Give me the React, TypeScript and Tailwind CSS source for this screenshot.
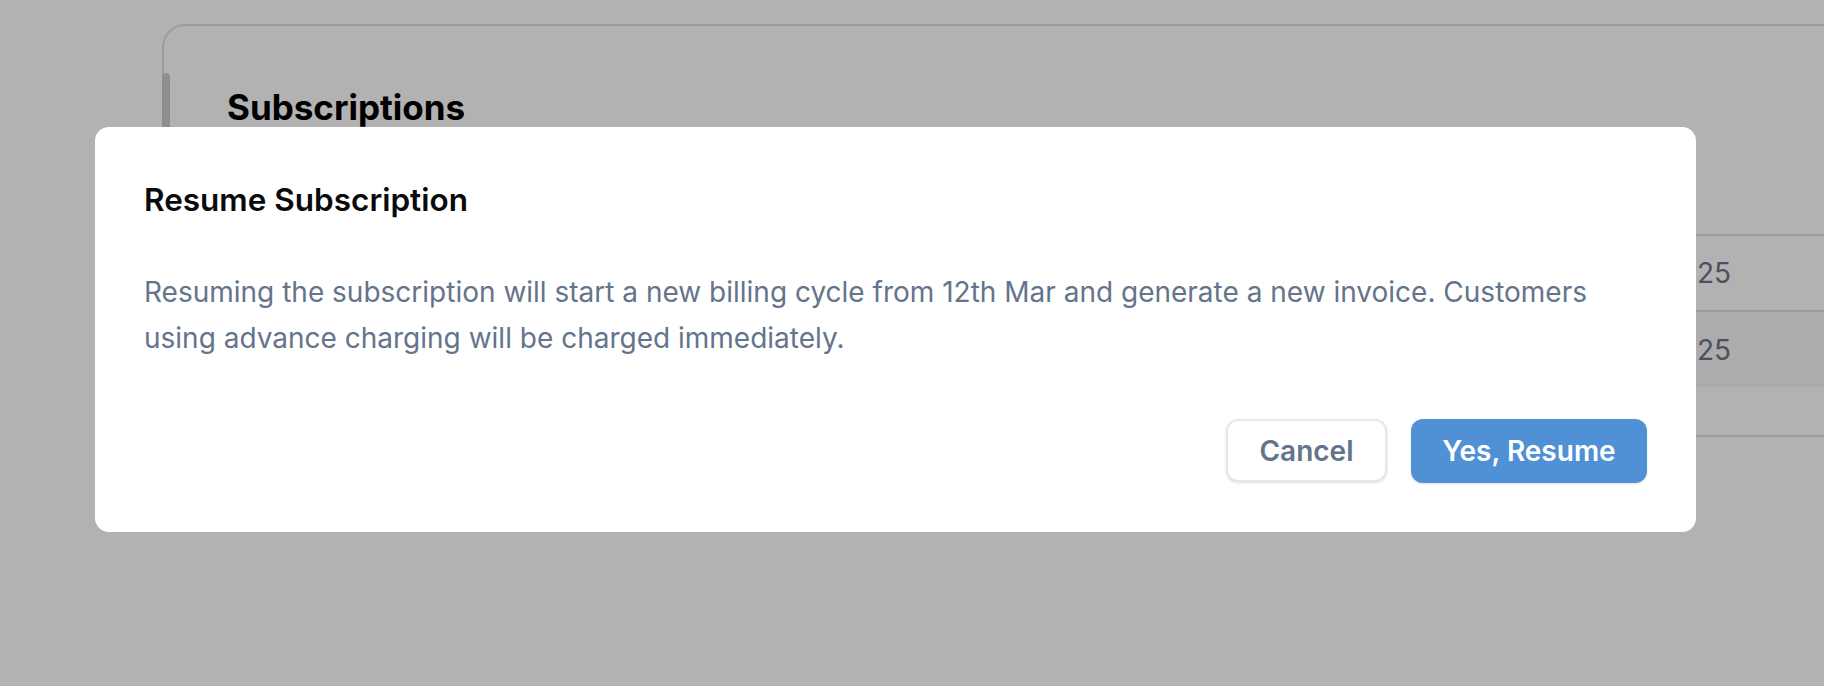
const ROWS = ["Mar 12, 2025", "Feb 12, 2025"];

function PageBehind() {
  return (
    <div className="pl-[162px] pt-[24px]">
      <div className="relative h-[413px] w-[1760px] rounded-[23px] border-2 border-[#dfe0e6] bg-white">
        <div className="absolute left-[-2px] top-[47px] h-[120px] w-[8px] rounded-full bg-[#cbccd2]" />
        <div className="px-[63px] pt-[56px]">
          <h1 className="text-[35px] font-bold leading-[50px] text-black">Subscriptions</h1>
        </div>
        <div className="mt-[102px]">
          {ROWS.map((d, i) => (
            <div
              key={d}
              className={
                i === 1
                  ? "flex h-[77px] items-center border-t-2 border-[#dfe0e6] bg-[#f6f6f8]"
                  : "flex h-[76px] items-center border-t-2 border-[#dfe0e6]"
              }
            >
              <div className="w-[1567px] text-right text-[28px] text-[#6b7687]">{d}</div>
            </div>
          ))}
          <div className="h-[48px]" />
          <div className="border-t-2 border-[#dfe0e6]" />
        </div>
      </div>
    </div>
  );
}

export default function App() {
  return (
    <div
      className="relative h-[686px] w-[1824px] overflow-hidden bg-white"
      style={{ fontFamily: "Inter, 'Noto Sans', sans-serif" }}
    >
      <PageBehind />
      <div className="absolute inset-0 bg-black/30" />
      <div className="absolute left-[95px] top-[127px] w-[1601px] rounded-[14px] bg-white px-[49px] pb-[49px] pt-[48px]">
        <h2 className="text-[31.5px] font-semibold leading-[49px] text-[#0a0a0a]">Resume Subscription</h2>
        <p className="mt-[46px] text-[28px] leading-[45.5px] text-[#64748b]">
          Resuming the subscription will start a new billing cycle from 12th Mar and generate a new invoice. Customers
          using advance charging will be charged immediately.
        </p>
        <div className="mt-[58px] flex justify-end gap-[24px]">
          <button className="h-[63px] w-[161px] rounded-[12px] border-2 border-[#e2e8f0] bg-white text-[28px] font-semibold text-[#64748b] shadow-sm">
            Cancel
          </button>
          <button className="h-[64px] w-[236px] rounded-[12px] bg-[#4f91d4] text-[28px] font-semibold text-white shadow-sm">
            Yes, Resume
          </button>
        </div>
      </div>
    </div>
  );
}
